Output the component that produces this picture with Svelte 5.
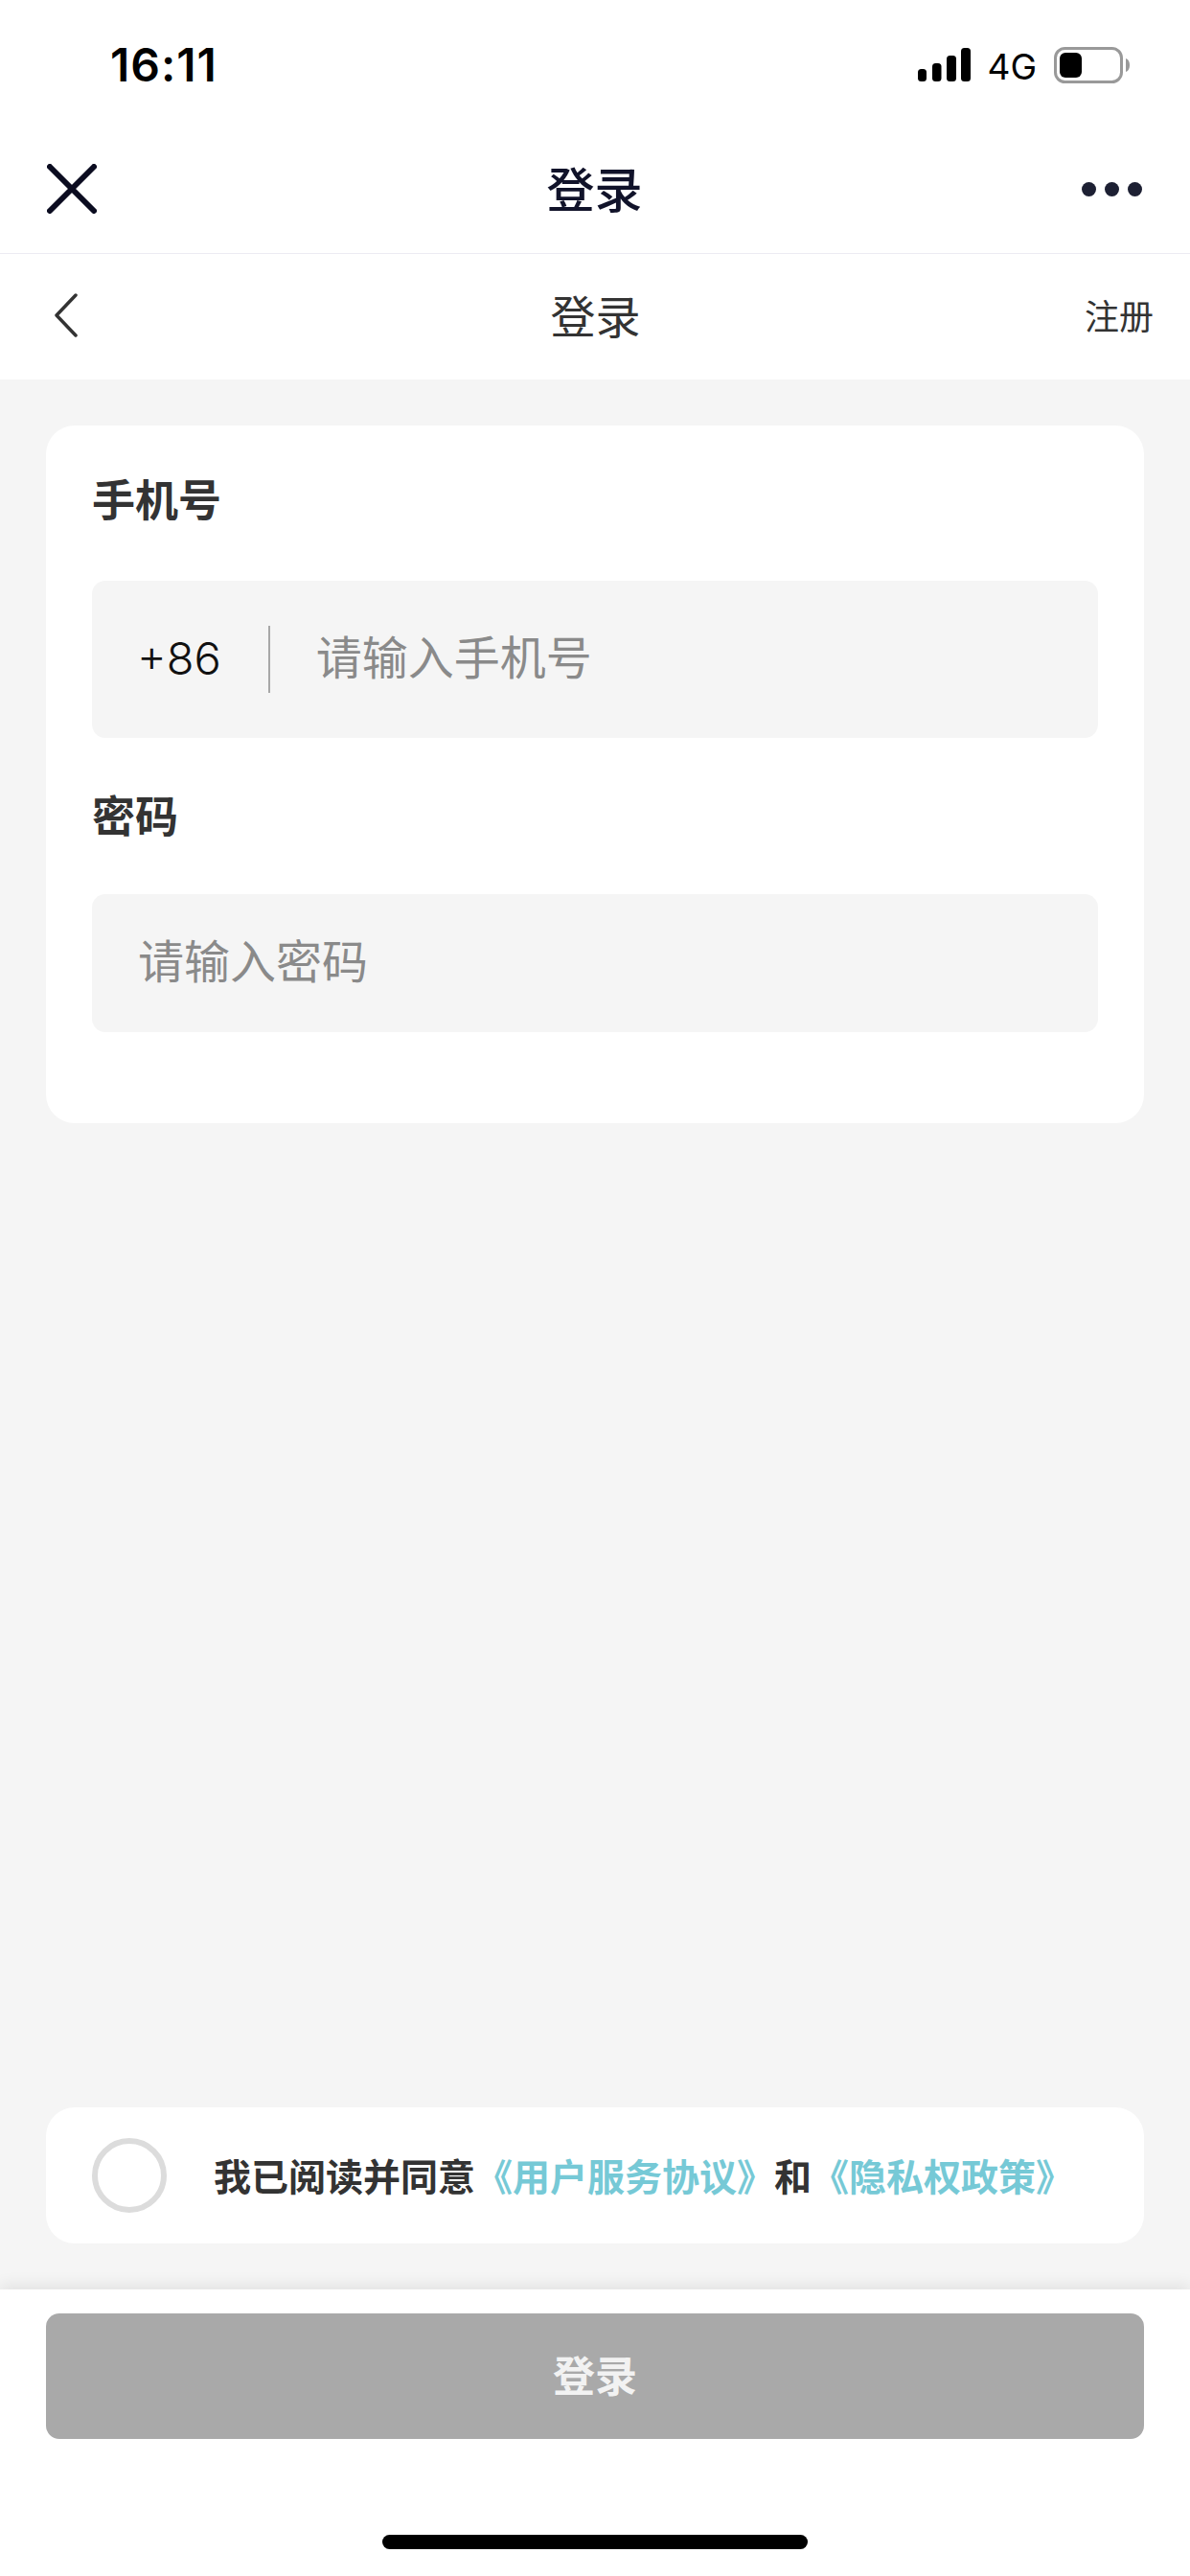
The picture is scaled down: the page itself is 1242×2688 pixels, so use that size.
<script lang="ts">
  let agreed: boolean = $state(false);
</script>

<div class="page">
  <!-- Status bar -->
  <div class="status">
    <span class="time">16:11</span>
    <div class="status-right">
      <svg class="signal" width="55" height="35" viewBox="0 0 55 35" fill="#000">
        <rect x="0" y="22" width="9" height="13" rx="3.5" />
        <rect x="15" y="16" width="9.5" height="19" rx="3.5" />
        <rect x="30" y="8" width="10" height="27" rx="3.5" />
        <rect x="45" y="0" width="10" height="35" rx="3.5" />
      </svg>
      <span class="net">4G</span>
      <svg class="battery" width="80" height="38" viewBox="0 0 80 38">
        <rect x="1.5" y="1.5" width="69" height="35" rx="10" fill="none" stroke="#999" stroke-width="3" />
        <rect x="6" y="6" width="23" height="26" rx="6" fill="#000" />
        <path d="M75 12c3 1 4 4 4 7s-1 6-4 7z" fill="#999" />
      </svg>
    </div>
  </div>

  <!-- Mini program bar -->
  <div class="topbar">
    <svg class="close" width="52" height="52" viewBox="0 0 52 52" fill="none" stroke="#0b0c20" stroke-width="6" stroke-linecap="round">
      <path d="M3 3l46 46M49 3L3 49" />
    </svg>
    <span class="topbar-title">登录</span>
    <div class="dots"><i></i><i></i><i></i></div>
  </div>

  <!-- Page header -->
  <div class="subbar">
    <svg class="back" width="24" height="46" viewBox="0 0 24 46" fill="none" stroke="#333" stroke-width="3.5" stroke-linecap="round" stroke-linejoin="round">
      <path d="M22 2L2 23l20 21" />
    </svg>
    <span class="subbar-title">登录</span>
    <span class="register">注册</span>
  </div>

  <main>
    <div class="card">
      <div class="label">手机号</div>
      <div class="field field-phone">
        <span class="code">+86</span>
        <span class="sep"></span>
        <span class="placeholder">请输入手机号</span>
      </div>
      <div class="label label-pwd">密码</div>
      <div class="field field-pwd">
        <span class="placeholder">请输入密码</span>
      </div>
    </div>

    <div class="agree">
      <button class="radio" class:on={agreed} aria-label="同意" onclick={() => (agreed = !agreed)}></button>
      <p>我已阅读并同意<a href="#user">《用户服务协议》</a>和<a href="#privacy">《隐私权政策》</a></p>
    </div>
  </main>

  <footer>
    <button class="submit">登录</button>
    <div class="home"></div>
  </footer>
</div>

<style>
  :global(body) {
    margin: 0;
    background: #fff;
  }

  .page {
    width: 1242px;
    height: 2688px;
    display: flex;
    flex-direction: column;
    background: #f5f5f5;
    font-family: "Noto Sans CJK SC", sans-serif;
    color: #333;
  }

  .status {
    height: 132px;
    flex: none;
    background: #fff;
    display: flex;
    justify-content: space-between;
    padding: 49px 62px 0 115px;
    box-sizing: border-box;
  }

  .time {
    font-family: Inter, sans-serif;
    font-size: 48px;
    font-weight: 600;
    line-height: 37px;
    color: #000;
    letter-spacing: 1px;
  }

  .status-right {
    display: flex;
    align-items: flex-start;
    height: 38px;
  }

  .signal {
    margin-top: 1px;
  }

  .net {
    font-family: Inter, sans-serif;
    font-size: 37px;
    line-height: 38px;
    margin: 2px 18px 0 17px;
    color: #000;
  }

  .topbar {
    height: 133px;
    flex: none;
    box-sizing: border-box;
    background: #fff;
    border-bottom: 1px solid #ecebf2;
    display: grid;
    grid-template-columns: 1fr auto 1fr;
    align-items: center;
    padding: 0 50px 3px 49px;
  }

  .topbar-title {
    font-size: 50px;
    font-weight: 500;
    color: #11132a;
    line-height: 1;
    padding-bottom: 3px;
  }

  .dots {
    justify-self: end;
    display: flex;
    gap: 9px;
    padding-top: 2px;
  }

  .dots i {
    width: 15px;
    height: 15px;
    border-radius: 50%;
    background: #1d2033;
  }

  .subbar {
    height: 131px;
    flex: none;
    background: #fff;
    display: grid;
    grid-template-columns: 1fr auto 1fr;
    align-items: center;
    padding: 0 38px 0 39px;
  }

  .back {
    margin: 0 0 3px 18px;
  }

  .subbar-title {
    font-size: 47px;
    line-height: 1;
    color: #333;
    padding-bottom: 6px;
  }

  .register {
    justify-self: end;
    font-size: 36px;
    line-height: 1;
    color: #333;
    padding-bottom: 5px;
  }

  main {
    flex: 1;
    padding: 48px 48px 48px;
    display: flex;
    flex-direction: column;
    justify-content: space-between;
    box-sizing: border-box;
  }

  .card {
    height: 728px;
    box-sizing: border-box;
    background: #fff;
    border-radius: 30px;
    padding: 50px 48px 0;
  }

  .label {
    font-size: 45px;
    font-weight: 700;
    line-height: 52px;
    color: #333;
  }

  .label-pwd {
    margin-top: 54px;
  }

  .field {
    margin-top: 60px;
    background: #f5f5f5;
    border-radius: 14px;
    display: flex;
    align-items: center;
    padding: 0 48px;
  }

  .label-pwd + .field {
    margin-top: 57px;
  }

  .field-phone {
    height: 164px;
  }

  .field-pwd {
    height: 144px;
  }

  .code {
    font-family: Inter, sans-serif;
    font-size: 47px;
    font-weight: 300;
    color: #111;
    margin-left: -1px;
    padding-bottom: 3px;
  }

  .sep {
    width: 2px;
    height: 70px;
    background: #a8a8a8;
    margin: 0 48px 0 49px;
  }

  .placeholder {
    font-size: 48px;
    line-height: 1;
    color: #8a8a8a;
    padding-bottom: 11px;
  }

  .agree {
    height: 142px;
    box-sizing: border-box;
    background: #fff;
    border-radius: 30px;
    display: flex;
    align-items: center;
    padding: 0 48px;
  }

  .radio {
    width: 78px;
    height: 78px;
    flex: none;
    padding: 0;
    box-sizing: border-box;
    border: 6px solid #dcdcdc;
    border-radius: 50%;
    background: none;
  }

  .radio.on {
    border-color: #76c9d6;
  }

  .agree p {
    margin: 0 0 3px 49px;
    font-size: 39px;
    font-weight: 700;
    color: #333;
    white-space: nowrap;
  }

  .agree a {
    color: #76c9d6;
    text-decoration: none;
  }

  footer {
    height: 299px;
    flex: none;
    box-sizing: border-box;
    background: #fff;
    padding: 25px 48px 0;
    box-shadow: 0 -6px 14px rgba(0, 0, 0, 0.07);
    display: flex;
    flex-direction: column;
    align-items: center;
  }

  .submit {
    width: 100%;
    height: 131px;
    flex: none;
    border: none;
    border-radius: 14px;
    padding: 0 0 5px;
    background: #a9a9a9;
    color: #f2f2f2;
    font-family: inherit;
    font-size: 44px;
    font-weight: 700;
  }

  .home {
    width: 444px;
    height: 15px;
    margin-top: 100px;
    border-radius: 8px;
    background: #000;
  }
</style>
